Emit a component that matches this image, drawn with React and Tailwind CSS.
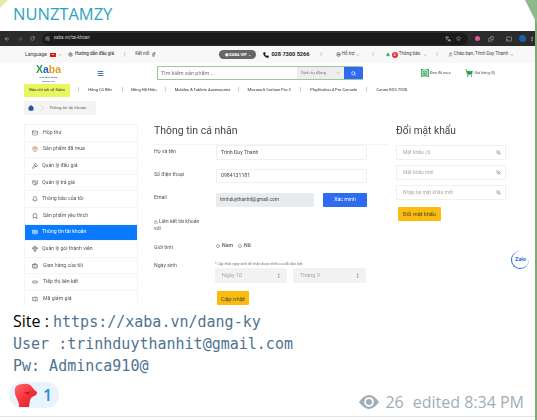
import React from "react";
import { ArrowLeft, ArrowRight, RotateCw, SlidersHorizontal, Languages, Star, Puzzle, Cast, MoreVertical, ChevronDown, ChevronRight, Settings, Phone, Bell, User, Search, Menu, ShoppingCart, ClipboardList, Home, Mail, Package, Gavel, Handshake, Bookmark, IdCard, Gem, Briefcase, Link2, Ticket, EyeOff, Lock, Facebook } from "lucide-react";

const Sep = () => <span className="text-[#777] text-[5px]">|</span>;

const sideItems = [
  [Mail, "Hộp thư", "pl-[7px] gap-[5px]", "text-[#555]"],
  [Package, "Sản phẩm đã mua", "pl-[7px] gap-[5px]", "text-[#b5762a]"],
  [Gavel, "Quản lý đấu giá", "pl-[7px] gap-[4px]", "text-[#444]"],
  [Handshake, "Quản lý trả giá", "pl-[7px] gap-[4px]", "text-[#555]"],
  [Bell, "Thông báo của tôi", "pl-[7px] gap-[4px]", "text-[#444]"],
  [Bookmark, "Sản phẩm yêu thích", "pl-[7px] gap-[5px]", "text-[#333]"],
  [IdCard, "Thông tin tài khoản", "pl-[7px] gap-[4px]", "text-white", true],
  [Gem, "Quản lý gói thành viên", "pl-[7px] gap-[4px]", "text-[#555]"],
  [Briefcase, "Gian hàng của tôi", "pl-[7px] gap-[5px]", "text-[#444]"],
  [Link2, "Tiếp thị liên kết", "pl-[7px] gap-[5px]", "text-[#444]"],
  [Ticket, "Mã giảm giá", "pl-[7px] gap-[5px]", "text-[#444]"],
];

function PwInput({ text }) {
  return (
    <div className="h-[15px] w-[110px] border border-[#f0f0f0] flex items-center justify-between pl-[6px] pr-[4px] text-[5px] text-[#aaaaaa]">
      <span>{text}</span>
      <EyeOff size={5} className="text-[#777]" />
    </div>
  );
}

function Glove() {
  return (
    <svg width="24" height="26" viewBox="0 0 24 26">
      <defs>
        <linearGradient id="g" x1="0" y1="0" x2="1" y2="1">
          <stop offset="0" stopColor="#ff6a6a" />
          <stop offset="0.55" stopColor="#f4303a" />
          <stop offset="1" stopColor="#d81c28" />
        </linearGradient>
      </defs>
      <path d="M1 6 Q3 2 9 2 Q15 1 18 5 Q20 8 23 10 Q23 13 20 14 Q17 15 16 18 L15 25 L5 25 Q5 20 3 17 Q0 12 1 6 Z" fill="url(#g)" />
      <path d="M10 10 Q13 11 16 9 L15 12 Q12 13 10 10 Z" fill="#c41822" />
    </svg>
  );
}

function SolidEye() {
  return (
    <svg width="20" height="14" viewBox="0 0 20 14">
      <path d="M0 7 Q5 0 10 0 Q15 0 20 7 Q15 14 10 14 Q5 14 0 7 Z" fill="#a0adb8" />
      <circle cx="10" cy="7" r="4.8" fill="#ffffff" />
      <circle cx="10" cy="7" r="3" fill="#a0adb8" />
    </svg>
  );
}

export default function App() {
  return (
    <div className="w-[537px] h-[420px] bg-white overflow-hidden relative" style={{ fontFamily: '"Open Sans", sans-serif' }}>
      <div className="w-[535px] h-[417px] bg-white">
        <div className="h-[31px] pl-[13px] pt-[3px] text-[16.5px] leading-[22px] text-[#2ba3bf]">NUNZTAMZY</div>

        {/* screenshot */}
        <div className="h-[274px] overflow-hidden relative blur-[0.4px] text-[#444]" style={{ fontFamily: 'Roboto, sans-serif' }}>
          {/* browser bar */}
          <div className="h-[15px] bg-[#2b2b2b] flex items-center pl-[4px] text-[#cfcfcf]">
            <ArrowLeft size={6} className="mr-[7px]" />
            <ArrowRight size={6} className="mr-[7px] text-[#777]" />
            <RotateCw size={5} className="mr-[7px]" />
            <div className="w-[430px] h-[12px] rounded-full bg-[#1b1b1b] flex items-center pl-[3px] pr-[7px] text-[4.5px]">
              <SlidersHorizontal size={5} className="mr-[4px]" />
              <span className="flex-1">xaba.vn/tai-khoan</span>
              <Languages size={6} className="mr-[5px]" />
              <Star size={5} />
            </div>
            <span className="ml-[7px] w-[5px] h-[5px] rounded-full bg-[#e0559a]" />
            <Puzzle size={6} className="ml-[8px]" />
            <Cast size={6} className="ml-[12px]" />
            <span className="ml-[7px] w-[7px] h-[7px] rounded-full bg-[#1a5fa8]" />
            <MoreVertical size={6} className="ml-[3px]" />
          </div>

          {/* top bar */}
          <div className="h-[17px] bg-[#f8f8f8] flex items-center pl-[25px] text-[4.6px] text-[#444] whitespace-nowrap">
            <span className="text-[5px]">Language</span>
            <span className="ml-[3px] w-[6px] h-[4px] bg-[#dd1c1c] flex items-center justify-center"><span className="w-[1.5px] h-[1.5px] bg-yellow-300 rounded-full" /></span>
            <ChevronDown size={4} className="ml-[2px]" />
            <Settings size={5} className="ml-[6px] mr-[2px] text-[#222]" />
            <span className="font-medium">Hướng dẫn đấu giá</span>
            <span className="ml-[10px]"><Sep /></span>
            <span className="ml-[10px]">Kết nối</span>
            <Facebook size={5} className="ml-[2px] text-[#222]" />
            <div className="ml-[63px] w-[37px] h-[9px] rounded-full bg-[#666] text-white font-bold text-[4px] flex items-center justify-center">◉ XABA VIP ⌄</div>
            <Phone size={6} className="ml-[7px] text-[#111]" fill="#111" />
            <span className="ml-[2px] text-[5.6px] font-bold text-[#222]">028 7300 5266</span>
            <span className="ml-[11px]"><Sep /></span>
            <Settings size={5} className="ml-[14px] mr-[1px] text-[#222]" />
            <span>Hỗ trợ</span>
            <ChevronDown size={4} className="ml-[2px]" />
            <span className="ml-[12px]"><Sep /></span>
            <Bell size={4} className="ml-[12px] text-[#2aa84a]" fill="#2aa84a" />
            <span className="ml-[2px] w-[6px] h-[6px] rounded-full bg-[#e0303a] text-white text-[4px] flex items-center justify-center">4</span>
            <span className="ml-[1px]">Thông báo</span>
            <ChevronDown size={4} className="ml-[2px]" />
            <span className="ml-[10px]"><Sep /></span>
            <User size={5} className="ml-[10px] mr-[1px]" />
            <span>Chào bạn, Trình Duy Thanh</span>
            <ChevronDown size={4} className="ml-[2px]" />
          </div>

          {/* header */}
          <div className="h-[20px] flex items-center pl-[25px] whitespace-nowrap">
            <div className="w-[47px] flex flex-col items-center" >
              <span className="text-[10.5px] font-bold leading-[13px]" style={{ fontFamily: '"Liberation Sans", sans-serif' }}>
                <span className="text-[#1f9d55]">X</span><span className="text-[#2563c9]">a</span><span className="text-[#e0a020]">b</span><span className="text-[#e0a020]">a</span>
              </span>
              <span className="text-[2.4px] font-bold text-[#2c5aa0] leading-[3.2px]">NHÀ MUA ĐƯỢC</span>
              <span className="text-[2.4px] font-bold text-[#2c5aa0] leading-[3.2px]">TRONG TAY</span>
            </div>
            <Menu size={7} className="ml-[25px] text-[#2f55b0]" strokeWidth={3} />
            <div className="ml-[53px] w-[206px] h-[14px] flex rounded-[1px] border border-[#9cc79c] border-r-0">
              <div className="w-[139px] flex items-center pl-[3px] text-[5.5px] text-[#777]">Tìm kiếm sản phẩm ...</div>
              <div className="w-[47px] bg-[#ededed] flex items-center justify-between px-[4px] text-[4.4px] text-[#777]">
                <span>Dịch tự động</span><ChevronDown size={4} />
              </div>
              <div className="w-[19px] bg-[#2f6bf0] flex items-center justify-center rounded-r-[1px]">
                <Search size={5} className="text-white" strokeWidth={3} />
              </div>
            </div>
            <ClipboardList size={8} className="ml-[58px] text-white bg-[#3cae5a]" />
            <span className="ml-[1px] text-[3.8px] text-[#555]">Đơn đã mua</span>
            <ShoppingCart size={8} className="ml-[14px] text-[#23a047]" fill="#23a047" />
            <span className="ml-[2px] text-[3.8px] text-[#555]">Giỏ hàng (0)</span>
          </div>

          {/* nav */}
          <div className="h-[14px] flex items-center pl-[24px] text-[4.1px] text-[#333] whitespace-nowrap">
            <div className="w-[46px] h-[13px] bg-[#e9f75f] flex items-center justify-center">Báo chí nói về Xaba</div>
            <span className="ml-[8px]"><Sep /></span>
            <span className="ml-[9px]">Hãng Cũ Bền</span>
            <span className="ml-[10px]"><Sep /></span>
            <span className="ml-[8px]">Đồng Hồ Hiệu</span>
            <span className="ml-[8px]"><Sep /></span>
            <span className="ml-[9px]">Mobiles &amp; Tablets Accessories</span>
            <span className="ml-[8px]"><Sep /></span>
            <span className="ml-[8px]">Microsoft Surface Pro 3</span>
            <span className="ml-[9px]"><Sep /></span>
            <span className="ml-[9px]">PlayStation 4 Pro Console</span>
            <span className="ml-[9px]"><Sep /></span>
            <span className="ml-[9px]">Canon EOS 700D</span>
          </div>

          {/* breadcrumb */}
          <div className="mt-[4px] ml-[24px] w-[72px] h-[14px] bg-[#f4f4f4] rounded-[1px] flex items-center pl-[4px] text-[4.4px] text-[#666]">
            <Home size={6} className="text-[#2456a6]" fill="#2456a6" />
            <ChevronRight size={12} strokeWidth={0.6} className="ml-[2px] text-[#999]" />
            <span className="ml-[1px]">Thông tin tài khoản</span>
          </div>

          {/* main */}
          <div className="mt-[9px] flex pl-[24px]">
            {/* sidebar */}
            <div className="w-[114px] border border-[#f5f5f5] shrink-0 h-[190px]">
              {sideItems.map(([Ic, label, cls, col, active]) => (
                <div key={label} className={`h-[16.6px] flex items-center text-[5.2px] border-b border-[#f5f5f5] ${cls} ${active ? "bg-[#0a7bff] text-white" : "text-[#555]"}`}>
                  <Ic size={6} className={col} fill={active ? "#ffffff33" : "none"} />
                  <span>{label}</span>
                </div>
              ))}
            </div>

            {/* form */}
            <div className="ml-[16px] w-[214px] shrink-0">
              <div className="text-[10.5px] leading-[14px] text-[#444] h-[21px] border-b border-[#f5f5f5] -mr-[20px]">Thông tin cá nhân</div>
              <div className="flex flex-col text-[5.2px] text-[#555]">
                <div className="flex items-center h-[15px]">
                  <span className="w-[62px] -mt-[2px]">Họ và tên</span>
                  <div className="w-[151px] h-[15px] border border-[#f0f0f0] flex items-center pl-[4px] text-[#444]">Trình Duy Thanh</div>
                </div>
                <div className="flex items-center mt-[9px] h-[14px]">
                  <span className="w-[62px] -mt-[2px]">Số điện thoại</span>
                  <div className="w-[151px] h-[14px] border border-[#f0f0f0] flex items-center pl-[4px] text-[#444]">0984131181</div>
                </div>
                <div className="flex items-center mt-[10px] h-[14px]">
                  <span className="w-[62px] -mt-[4px]">Email</span>
                  <div className="w-[98px] h-[14px] bg-[#e9ecef] flex items-center pl-[4px] text-[#444] text-[4.8px] rounded-[1px]">trinhduythanhit@gmail.com</div>
                  <div className="ml-[9px] w-[44px] h-[14px] bg-[#2f6bf0] rounded-[1px] text-white text-[5.2px] flex items-center justify-center">Xác minh</div>
                </div>
                <div className="w-[50px] mt-[11px] leading-[7px]">
                  <Lock size={4} className="inline mr-[1px] text-[#666]" />Liên kết tài khoản với
                </div>
                <div className="flex items-center mt-[9px] h-[10px]">
                  <span className="w-[62px] mt-[3px]">Giới tính</span>
                  <span className="w-[4px] h-[4px] rounded-full border-[0.5px] border-[#aaa]" />
                  <span className="ml-[2px] mr-[5px] font-medium">Nam</span>
                  <span className="w-[4px] h-[4px] rounded-full border-[0.5px] border-[#aaa]" />
                  <span className="ml-[2px] font-medium">Nữ</span>
                </div>
                <div className="flex mt-[10px]">
                  <span className="w-[61px] pt-[1px]">Ngày sinh</span>
                  <div className="flex flex-col">
                    <span className="text-[3.5px] leading-[6px] text-[#777] whitespace-nowrap">* Cập nhật ngày sinh để nhận được nhiều ưu đãi đặc biệt</span>
                    <div className="flex gap-[6px] mt-[1px]">
                      <div className="w-[72px] h-[15px] bg-[#f1f2f3] rounded-[1px] flex items-center justify-between pl-[7px] pr-[7px] text-[5.5px] text-[#aaa]"><span>Ngày 10</span><span className="text-[3px] text-[#555] leading-[3px]">▴<br />▾</span></div>
                      <div className="w-[73px] h-[15px] bg-[#f1f2f3] rounded-[1px] flex items-center justify-between pl-[7px] pr-[7px] text-[5.5px] text-[#aaa]"><span>Tháng 9</span><span className="text-[3px] text-[#555] leading-[3px]">▴<br />▾</span></div>
                    </div>
                  </div>
                </div>
                <div className="ml-[63px] mt-[8px] w-[32px] h-[14px] bg-[#fbbc0d] rounded-[1px] text-[6px] text-[#444] flex items-center justify-center">Cập nhật</div>
              </div>
            </div>

            {/* password */}
            <div className="ml-[28px] w-[110px] shrink-0 relative z-10">
              <div className="text-[10.2px] leading-[14px] text-[#444] h-[21px]">Đổi mật khẩu</div>
              <div className="flex flex-col gap-[5px]">
                <PwInput text="Mật khẩu cũ" />
                <PwInput text="Mật khẩu mới" />
                <PwInput text="Nhập lại mật khẩu mới" />
              </div>
              <div className="ml-[2px] mt-[7px] w-[43px] h-[14px] bg-[#fbbc0d] rounded-[1px] text-[5.6px] text-[#444] flex items-center justify-center">Đổi mật khẩu</div>
            </div>
          </div>

          {/* zalo overlay */}
          <div className="absolute left-[511px] top-[220px] w-[18px] h-[18px] rounded-full bg-white flex items-center justify-center border-l-[1.5px] border-b-[1.5px] border-[#1f6fd6]">
            <span className="text-[5.5px] font-bold text-[#1f6fd6]">Zalo</span>
          </div>
        </div>

        {/* message text */}
        <div className="pl-[13px] pt-[5px] text-[15px] leading-[22px] text-[#4f7391]" style={{ fontFamily: '"DejaVu Sans Mono", monospace' }}>
          <div className="whitespace-nowrap"><span className="text-[16px] text-black" style={{ fontFamily: '"Open Sans", sans-serif' }}>Site : </span>https://xaba.vn/dang-ky</div>
          <div className="whitespace-nowrap">User :trinhduythanhit@gmail.com</div>
          <div className="whitespace-nowrap">Pw: Adminca910@</div>
        </div>

        {/* footer */}
        <div className="flex items-start justify-between pl-[9px] pr-[11px] mt-[5px]">
          <div className="w-[50px] h-[26px] rounded-full bg-[#e8f4fd] flex items-center pl-[5px] text-[#2b8fd6] text-[16px]">
            <Glove />
            <span className="ml-[5px] font-semibold">1</span>
          </div>
          <div className="flex items-center mt-[9px] text-[16px] leading-[22px] text-[#a0adb8]">
            <SolidEye />
            <span className="ml-[6px]">26</span>
            <span className="ml-[9px]">edited 8:34 PM</span>
          </div>
        </div>
      </div>
      <div className="absolute left-0 right-[2px] top-[416px] h-[1px] bg-[#e4e4e4]" />
      {/* window edge */}
      <div className="absolute right-0 top-0 bottom-0 w-[2px] bg-[#7fa97a]" />
      <div className="absolute left-0 top-0 w-[8px] h-[8px] bg-[#e6e9a6]" style={{ clipPath: "polygon(0 0, 100% 0, 0 100%)" }} />
      <div className="absolute right-0 top-0 w-[12px] h-[24px] bg-[#8fb98a]" style={{ clipPath: "polygon(0 0, 100% 0, 100% 100%)" }} />
    </div>
  );
}
